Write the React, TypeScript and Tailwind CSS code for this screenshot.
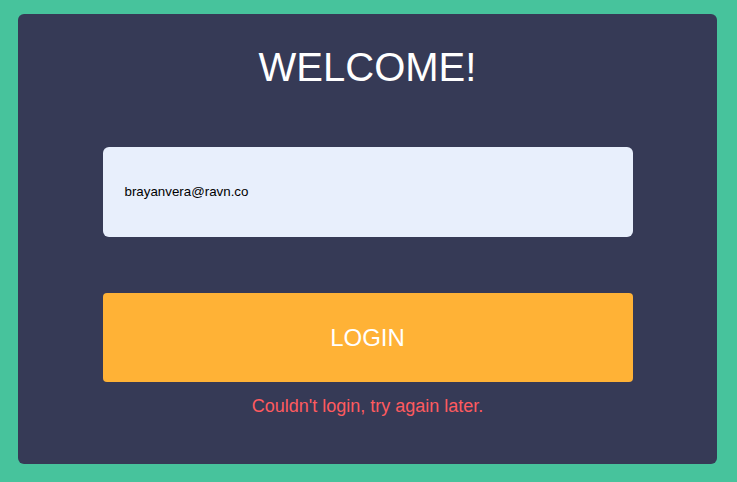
import React from "react";

const App: React.FC = () => {
    return (
        <div className="w-[737px] h-[482px] bg-[#47c39c] pt-[14px] pl-[18px] font-['Liberation_Sans',Arial,sans-serif]">
            <div className="w-[699px] h-[450px] bg-[#363a56] rounded-[6px] pt-[30px] flex flex-col items-center">
                {/* Title */}
                <h1 className="text-[40px] leading-[46px] text-white font-normal">WELCOME!</h1>

                {/* Email */}
                <div className="mt-[57px] w-[530px] h-[90px] bg-[#e8effc] rounded-[6px] flex items-center px-[22px]">
                    <span className="text-[13.33px] text-black">brayanvera@ravn.co</span>
                </div>

                {/* Button */}
                <button className="mt-[56px] w-[530px] h-[89px] bg-[#ffb236] rounded-[4px] text-white text-[24px] leading-none">
                    LOGIN
                </button>

                {/* Error */}
                <p className="mt-[13px] text-[18px] leading-[22px] text-[#ff5a5f]">
                    Couldn't login, try again later.
                </p>
            </div>
        </div>
    );
};

export default App;
